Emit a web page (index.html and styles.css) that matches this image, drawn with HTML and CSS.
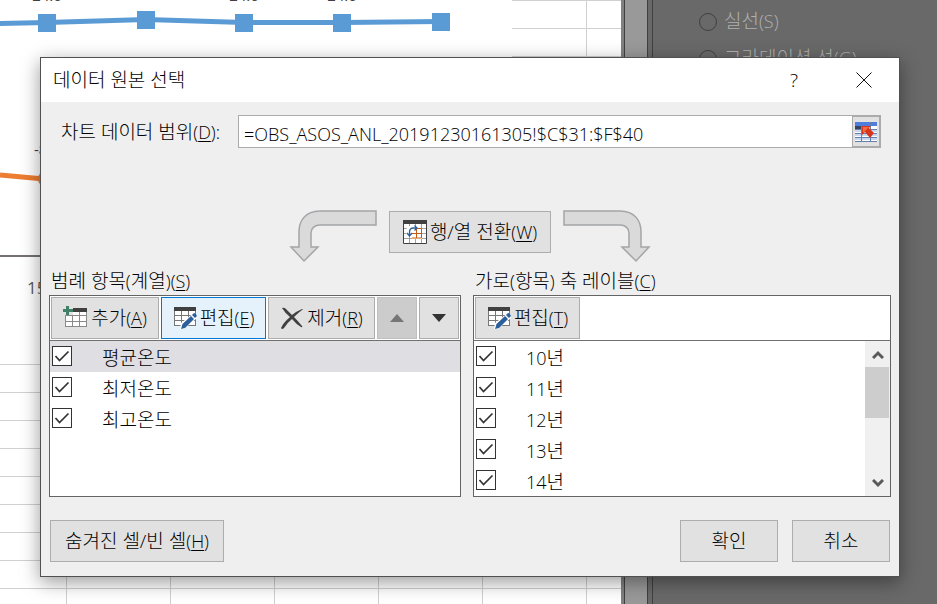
FILE: index.html
```html
<!DOCTYPE html>
<html lang="ko">
<head>
<meta charset="utf-8">
<title>데이터 원본 선택</title>
<link rel="stylesheet" href="styles.css">
</head>
<body>
<svg class="defs" width="0" height="0" aria-hidden="true">
  <defs>
    <symbol id="table" viewBox="0 0 24 22">
      <path fill="#fff" d="M1 2h22v18H1z"/>
      <path fill="none" stroke="#8a8a8a" d="M1.500 5v15M8.500 5v15M15.500 5v15M22.500 5v15M1 8.500h22M1 14.500h22M1 19.500h22"/>
      <path fill="#404040" d="M1 1h22v4H1z"/>
    </symbol>
    <symbol id="edit" viewBox="0 0 24 24">
      <path fill="#fff" d="M1 2h22v18H1z"/>
      <path fill="none" stroke="#777" d="M1.500 5v15M8.500 5v15M15.500 5v15M22.500 5v15M1 9.500h22M1 14.500h22M1 19.500h22"/>
      <path fill="#404040" d="M1 1h22v4H1z"/>
      <path fill="#fff" d="M21 7l3 2v3L11 23H7l1-6z"/>
      <path fill="#2b5f9b" d="M8 23l1.500-5L18 10l3 3-9 9zM19 9l2-2q2 0 3 3l-2 2z"/>
    </symbol>
    <symbol id="arrow" viewBox="0 0 88 54">
      <path fill="#dadada" stroke="#a3a5a8" stroke-width="1.500" d="M87 1H31C16 1 10 11 10 22v15H2l13 14 14-14h-7V23c0-5 4-8 9-8h56z"/>
    </symbol>
    <symbol id="check" viewBox="0 0 20 20">
      <path fill="none" stroke="#333" stroke-width="1.700" d="M3.500 10l4 4.500L16.500 5.500"/>
    </symbol>
  </defs>
</svg>

<main class="app">
  <section class="sheet" aria-label="시트">
    <svg class="chart" width="512" height="364">
      <path fill="#fff" d="M0 0h512v364H0z"/>
      <g class="chart-label"><text x="47" y="1">24.6</text><text x="244" y="1">24.6</text><text x="342" y="1">24.6</text></g>
      <path fill="none" stroke="#5b9bd5" stroke-width="5" d="M0 23.500L47 22.500 146 19.500 244 22.500H342L441 21.500"/>
      <path fill="#5b9bd5" d="M38 14h18v18H38zM137 11h18v18h-18zM235 14h18v18h-18zM333 14h18v18h-18zM432 13h18v18h-18z"/>
      <path fill="none" stroke="#ed7d31" stroke-width="5" d="M0 175l44 4"/>
      <circle cx="46" cy="179" r="8" fill="#ed7d31"/>
      <path stroke="#767171" stroke-width="2" d="M0 256h512"/>
      <g class="chart-label"><text x="47" y="155">-8.2</text></g>
      <g class="axis-label"><text x="27" y="294">15년</text></g>
    </svg>
  </section>
  <div class="splitter"></div>
  <aside class="pane">
    <label class="option"><input type="radio" name="line"><span>실선<span class="en">(S)</span></span></label>
    <label class="option"><input type="radio" name="line"><span>그라데이션 선<span class="en">(G)</span></span></label>
  </aside>
</main>

<div class="dialog" role="dialog" aria-labelledby="title">
  <header class="titlebar">
    <h1 id="title">데이터 원본 선택</h1>
    <button class="caption help" aria-label="도움말">?</button>
    <button class="caption" aria-label="닫기"><svg width="16" height="16"><path stroke="#111" d="M.5.5l15 15M15.500.5l-15 15"/></svg></button>
  </header>
  <div class="content">
    <div class="range">
      <label for="range">차트 데이터 범위<span class="en">(<u>D</u>):</span></label>
      <input id="range" type="text" value="=OBS_ASOS_ANL_20191230161305!$C$31:$F$40">
      <button class="picker" aria-label="범위 선택">
        <svg width="22" height="20">
          <path fill="#fff" d="M0 0h22v20H0z"/>
          <path fill="#4e7ddd" d="M0 0h22v4H0z"/>
          <path fill="#35435f" d="M0 4h6v3H0z"/>
          <path fill="#c8d7ee" d="M0 8h22v2H0zM0 12h22v2H0zM0 16h22v2H0z"/>
          <path fill="none" stroke="#6580ad" d="M0 7.500h22M0 11.500h22M0 15.500h22M0 19.500h22M6.500 4v16M15.500 0v20"/>
          <path fill="#d8351b" d="M7 4h9l-2 2 5 5-4 5-5-6-3 3z"/>
          <path fill="#f36b43" d="M8 5h6l-6 6z"/>
        </svg>
      </button>
    </div>

    <div class="switch">
      <svg width="88" height="54" aria-hidden="true"><use href="#arrow"/></svg>
      <button class="btn">
        <svg width="24" height="24">
          <path fill="#fff" stroke="#404040" d="M.5.5h23v23H.5z"/>
          <path fill="#404040" d="M0 0h24v4H0z"/>
          <path fill="none" stroke="#a0a0a0" d="M1 8.500h22M1 13.500h22M1 18.500h22M6.500 4v19M12.500 4v19M18.500 4v19"/>
          <path fill="#fff" d="M4 6h11v7h4v6H9v-3H3z"/>
          <path fill="none" stroke="#c55a11" d="M14 8.500h4.500v9.500H9M9 13.500h10M13.500 9v9"/>
          <path fill="none" stroke="#2b5f9b" stroke-width="1.300" d="M6.500 16v-4q0-4 4-4H14M11.500 5.500L14 8l-2.500 2.500M4 13l2.500 3L9 13"/>
        </svg>
        <span>행/열 전환<span class="en">(<u>W</u>)</span></span>
      </button>
      <svg class="flip" width="88" height="54" aria-hidden="true"><use href="#arrow"/></svg>
    </div>

    <div class="panels">
      <section>
        <h2>범례 항목<span class="en">(</span>계열<span class="en">)(<u>S</u>)</span></h2>
        <div class="box">
          <div class="toolbar">
            <button class="btn add"><svg width="25" height="24"><use href="#table" x="1" y="1" width="24" height="22"/><path fill="#e1e1e1" d="M0 0h10v9H0z"/><path fill="#3f8068" d="M3 0h3v3h4v3H6v3H3V6H0V3h3z"/></svg><span>추가<span class="en">(<u>A</u>)</span></span></button>
            <button class="btn edit hot"><svg width="24" height="24"><use href="#edit"/></svg><span>편집<span class="en">(<u>E</u>)</span></span></button>
            <button class="btn remove"><svg width="24" height="24"><path fill="#404040" d="M2 2q2-1 4 1l6 6q5-4 10-6 2 0 0 1-4 3-8 7 4 4 8 9 1 2-1 1-5-3-9-8-5 4-8 9-2 2-3 0 2-5 9-11-5-4-8-9z"/></svg><span>제거<span class="en">(<u>R</u>)</span></span></button>
            <button class="btn move" disabled aria-label="위로"><svg width="14" height="8"><path fill="#767676" d="M7 0l7 8H0z"/></svg></button>
            <button class="btn move" aria-label="아래로"><svg width="14" height="8"><path fill="#333" d="M0 0h14L7 8z"/></svg></button>
          </div>
          <div class="scroller">
            <ul>
              <li class="selected"><label><span class="tick"><input type="checkbox" checked><svg><use href="#check"/></svg></span>평균온도</label></li>
              <li><label><span class="tick"><input type="checkbox" checked><svg><use href="#check"/></svg></span>최저온도</label></li>
              <li><label><span class="tick"><input type="checkbox" checked><svg><use href="#check"/></svg></span>최고온도</label></li>
            </ul>
          </div>
        </div>
      </section>
      <section>
        <h2>가로<span class="en">(</span>항목<span class="en">)</span> 축 레이블<span class="en">(<u>C</u>)</span></h2>
        <div class="box">
          <div class="toolbar">
            <button class="btn edit"><svg width="24" height="24"><use href="#edit"/></svg><span>편집<span class="en">(<u>T</u>)</span></span></button>
          </div>
          <div class="scroller">
            <ul>
              <li><label><span class="tick"><input type="checkbox" checked><svg><use href="#check"/></svg></span><span><span class="en">10</span>년</span></label></li>
              <li><label><span class="tick"><input type="checkbox" checked><svg><use href="#check"/></svg></span><span><span class="en">11</span>년</span></label></li>
              <li><label><span class="tick"><input type="checkbox" checked><svg><use href="#check"/></svg></span><span><span class="en">12</span>년</span></label></li>
              <li><label><span class="tick"><input type="checkbox" checked><svg><use href="#check"/></svg></span><span><span class="en">13</span>년</span></label></li>
              <li><label><span class="tick"><input type="checkbox" checked><svg><use href="#check"/></svg></span><span><span class="en">14</span>년</span></label></li>
            </ul>
            <div class="scrollbar">
              <button aria-label="위로 스크롤"><svg width="12" height="9"><path fill="none" stroke="#5a5a5a" stroke-width="3" d="M1 8l5-5 5 5"/></svg></button>
              <div class="thumb"></div>
              <button aria-label="아래로 스크롤"><svg width="12" height="9"><path fill="none" stroke="#5a5a5a" stroke-width="3" d="M1 1l5 5 5-5"/></svg></button>
            </div>
          </div>
        </div>
      </section>
    </div>

    <footer>
      <button class="btn hidden-cells"><span>숨겨진 셀/빈 셀<span class="en">(<u>H</u>)</span></span></button>
      <button class="btn action">확인</button>
      <button class="btn action">취소</button>
    </footer>
  </div>
</div>
</body>
</html>
```
FILE: styles.css
```css
* {
  box-sizing: border-box;
}

body {
  margin: 0;
  background: #696969;
  color: #000;
  font: 300 19px/27px "Open Sans", "Noto Sans CJK KR", sans-serif;
}

button,
input {
  margin: 0;
  font: inherit;
  color: inherit;
}

button {
  padding: 0;
}

svg {
  display: block;
  flex: none;
}

.defs {
  position: absolute;
}

h1,
h2 {
  margin: 0;
  font: inherit;
}

u {
  text-underline-offset: 2px;
  text-decoration-thickness: 1px;
}

.en {
  font-size: 18px;
}

/* Workbook behind the dialog */
.app {
  display: grid;
  grid-template-columns: 1fr 32px 284px;
  height: 100vh;
  overflow: hidden;
}

.sheet {
  background-color: #fff;
  background-image:
    linear-gradient(#d0d0d0 1px, transparent 1px),
    linear-gradient(90deg, #d0d0d0 1px, transparent 1px);
  background-size: 100% 28px, 104px 100%;
  background-position: 0 0, 66px 0;
}

.chart-label {
  font-size: 15px;
  font-weight: 400;
  fill: #404040;
  text-anchor: middle;
}

.axis-label {
  font-size: 17px;
  font-weight: 400;
  fill: #595959;
}

.splitter {
  background: #999;
  border-right: 1px solid #404040;
  box-shadow: inset 3px 0 #808080, inset 4px 0 #404040, inset -4px 0 #696969, inset -5px 0 #404040;
}

.pane {
  padding: 3px 46px;
  background: #696969;
  color: #b0b0b0;
}

.option {
  display: flex;
  align-items: center;
  gap: 7px;
  height: 37px;
  white-space: nowrap;
}

.option input {
  appearance: none;
  width: 18px;
  height: 18px;
  border: 1px solid #404040;
  border-radius: 50%;
}

/* Dialog */
.dialog {
  position: absolute;
  top: 57px;
  left: 40px;
  right: 37px;
  border: 1px solid #505050;
  background: #efefef;
  box-shadow: 0 5px 18px rgba(0, 0, 0, 0.4);
}

.titlebar {
  display: flex;
  align-items: center;
  height: 44px;
  padding-left: 12px;
  background: #fff;
}

.titlebar h1 {
  flex: 1;
  padding-top: 1px;
}

.caption {
  display: grid;
  place-items: center;
  width: 70px;
  height: 44px;
  border: 0;
  background: none;
}

.content {
  padding: 13px 8px 14px;
}

.range {
  display: flex;
  align-items: center;
  height: 33px;
  padding: 0 10px 0 12px;
}

.range label {
  flex: 0 0 177px;
  padding-top: 2px;
}

.range input {
  flex: 1;
  min-width: 0;
  height: 33px;
  padding: 4px 5px 0;
  border: 1px solid #ababab;
  border-right: 0;
  border-radius: 0;
  background: #fff;
  font-size: 18px;
}

.picker {
  display: grid;
  place-items: center;
  width: 29px;
  height: 33px;
  border: 2px solid #ababab;
  border-left-width: 1px;
  background: #e1e1e1;
}

.switch {
  display: flex;
  justify-content: center;
  gap: 12px;
  margin-top: 62px;
}

.flip {
  transform: scaleX(-1);
}

.btn {
  display: flex;
  align-items: center;
  justify-content: center;
  gap: 3px;
  height: 42px;
  border: 1px solid #adadad;
  background: #e1e1e1;
  white-space: nowrap;
}

.btn span {
  padding-top: 1px;
}

.switch .btn {
  width: 162px;
  margin-top: 1px;
}

.panels {
  display: grid;
  grid-template-columns: minmax(0, 412fr) minmax(0, 418fr);
  gap: 12px;
  margin-top: 4px;
}

.panels h2 {
  padding-left: 2px;
}

.box {
  border: 1px solid #646464;
  background: #fff;
}

.toolbar {
  display: flex;
  gap: 2px;
  padding: 1px;
  border-bottom: 1px solid #707070;
}

.add {
  width: 108px;
}

.edit {
  width: 105px;
}

.remove {
  width: 107px;
}

.move {
  width: 40px;
}

.hot {
  border-color: #0078d7;
  background: #e5f1fb;
}

.btn:disabled {
  border-color: #bfbfbf;
  background: #ccc;
}

.scroller {
  display: flex;
  height: 155px;
}

ul {
  flex: 1;
  margin: 0;
  padding: 0;
  list-style: none;
}

li label {
  display: flex;
  gap: 30px;
  height: 31px;
  padding: 5px 0 0 2px;
  line-height: 24px;
}

.selected {
  background: #dfdee3;
}

.tick {
  display: grid;
  width: 20px;
  height: 20px;
}

.tick > * {
  grid-area: 1 / 1;
  width: 20px;
  height: 20px;
}

.tick input {
  appearance: none;
  border: 1px solid #333;
  background: #fff;
}

.tick svg {
  pointer-events: none;
}

.scrollbar {
  display: flex;
  flex-direction: column;
  width: 25px;
  background: #f0f0f0;
}

.scrollbar button {
  display: grid;
  place-items: center;
  height: 26px;
  border: 0;
  background: none;
}

.thumb {
  height: 51px;
  margin-right: 1px;
  margin-bottom: auto;
  background: #cdcdcd;
}

footer {
  display: flex;
  gap: 14px;
  margin-top: 23px;
  padding: 0 1px;
}

.hidden-cells {
  width: 174px;
  margin-right: auto;
}

.action {
  width: 98px;
}
```
